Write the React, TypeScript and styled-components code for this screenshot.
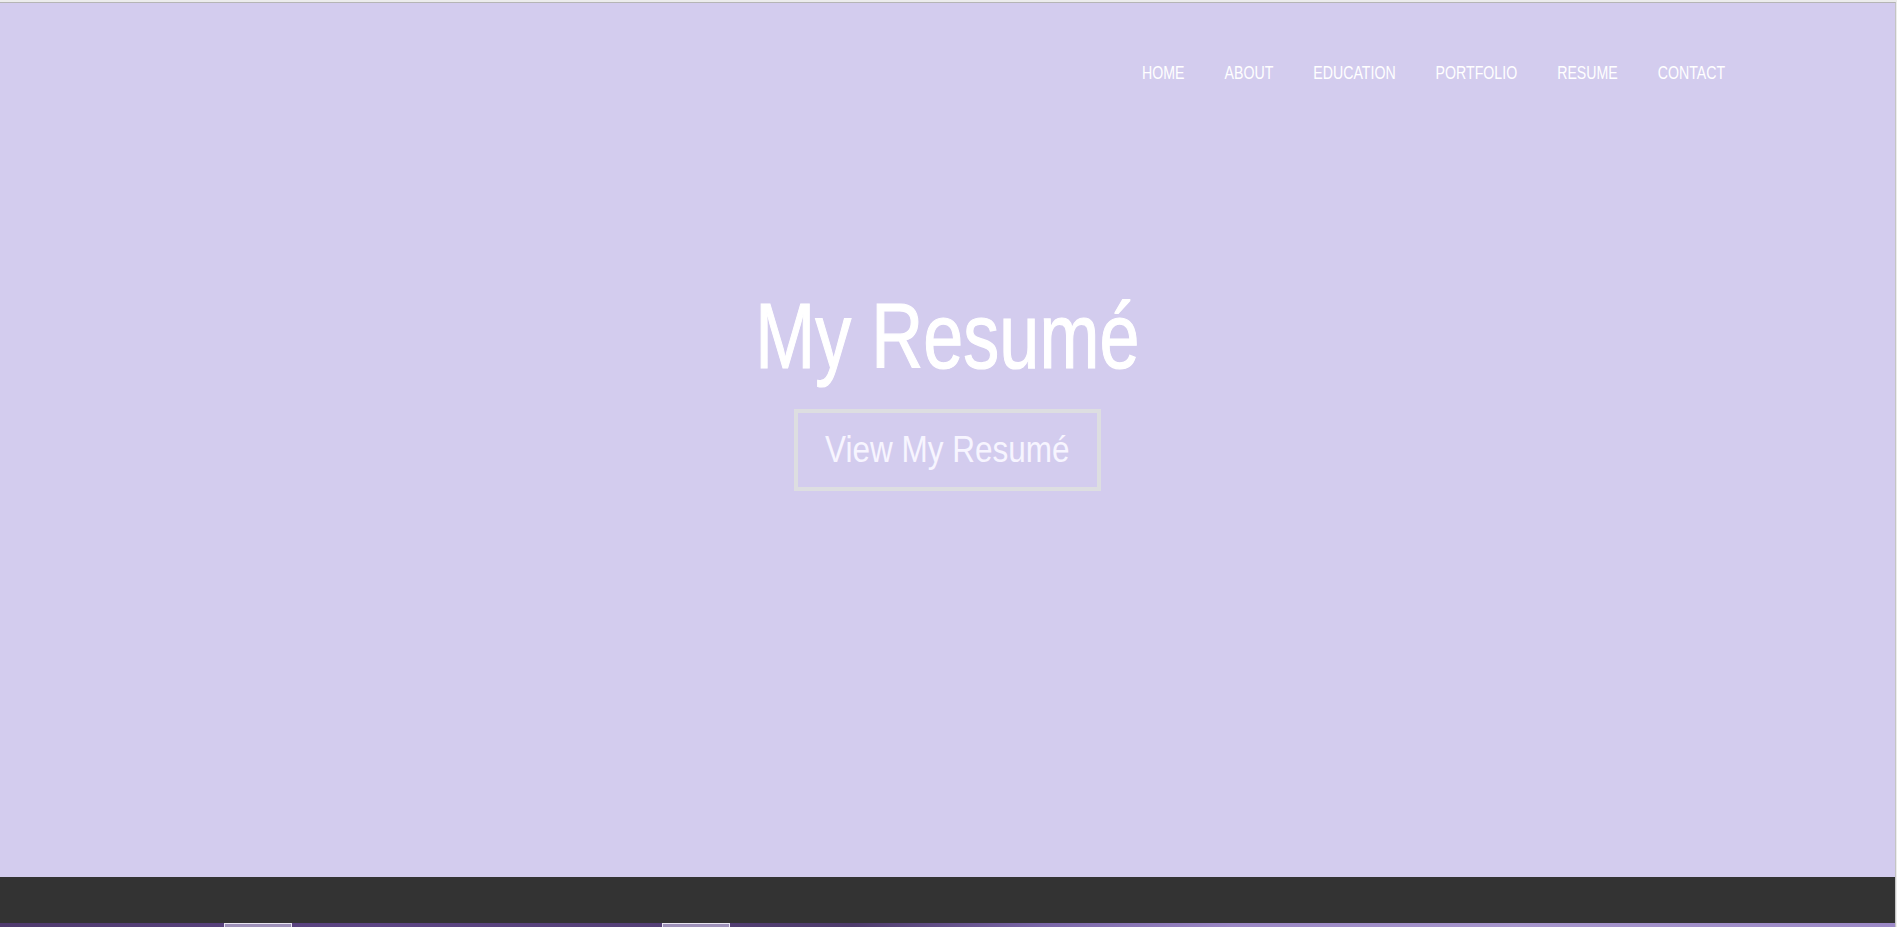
import React from "react";
import styled, { createGlobalStyle } from "styled-components";

const Global = createGlobalStyle`
  html, body {
    margin: 0;
    padding: 0;
    overflow: hidden;
    background: #ececec;
  }
  * { box-sizing: border-box; }
`;

const Viewport = styled.div`
  padding-top: 2px;
  padding-right: 1px;
  background: #ececec;
`;

const Page = styled.div`
  border-top: 1px solid #b5b5b5;
  border-right: 1px solid #c4c4c4;
  font-family: "Liberation Sans", Arial, sans-serif;
`;

const Hero = styled.section`
  height: 874px;
  background: #d3ccee;
  padding-top: 61px;
  display: flex;
  flex-direction: column;
  align-items: center;
`;

const Nav = styled.nav`
  align-self: stretch;
  display: flex;
  justify-content: flex-end;
  padding-right: 170px;
`;

/* The reference uses a condensed face; the list is narrowed as a whole,
   so the 52px gaps come out at 40px on screen. */
const NavList = styled.div`
  display: inline-flex;
  gap: 52.3px;
  transform: scaleX(0.765);
  transform-origin: right center;
`;

const NavLink = styled.a`
  font-size: 18.5px;
  line-height: 1;
  color: #ffffff;
  text-decoration: none;
  text-transform: uppercase;
  white-space: nowrap;
`;

const Condensed = styled.span<{ $sx: number }>`
  display: inline-block;
  white-space: nowrap;
  transform: scaleX(${(p) => p.$sx});
  transform-origin: center center;
`;

const Title = styled.h1`
  margin: 206px 0 0;
  font-size: 93.5px;
  line-height: 1;
  font-weight: 400;
  color: #ffffff;
  -webkit-text-stroke: 1.2px #ffffff;
  text-align: center;
`;

const ResumeButton = styled.a`
  margin-top: 27px;
  width: 307px;
  height: 82px;
  padding: 18px 0;
  border: 4px solid #dddee1;
  display: flex;
  justify-content: center;
  font-size: 37.7px;
  line-height: 1;
  color: #f7f5ff;
  text-decoration: none;
`;

const DarkBar = styled.div`
  height: 46px;
  background: #333333;
`;

const Gallery = styled.section`
  height: 300px;
  display: flex;
  gap: 370px;
  padding-left: 224px;
  background: linear-gradient(
    90deg,
    #4f3a6e 0%,
    #5d4585 20%,
    #4e3b6c 45%,
    #7a66a8 55%,
    #9a86c4 65%,
    #a695cc 80%,
    #9b88c6 100%
  );
`;

const Thumb = styled.div`
  width: 68px;
  height: 120px;
  border: 1px solid #e8e4f2;
  background: #9d90b8;
`;

const links = ["Home", "About", "Education", "Portfolio", "Resume", "Contact"];

export default function App() {
  return (
    <>
      <Global />
      <Viewport>
        <Page>
          <Hero>
            <Nav>
              <NavList>
                {links.map((l) => (
                  <NavLink key={l} href={`#${l.toLowerCase()}`}>
                    {l}
                  </NavLink>
                ))}
              </NavList>
            </Nav>
            <Title>
              <Condensed $sx={0.77}>My Resumé</Condensed>
            </Title>
            <ResumeButton href="#resume">
              <Condensed $sx={0.836}>View My Resumé</Condensed>
            </ResumeButton>
          </Hero>
          <DarkBar />
          <Gallery>
            <Thumb />
            <Thumb />
          </Gallery>
        </Page>
      </Viewport>
    </>
  );
}
